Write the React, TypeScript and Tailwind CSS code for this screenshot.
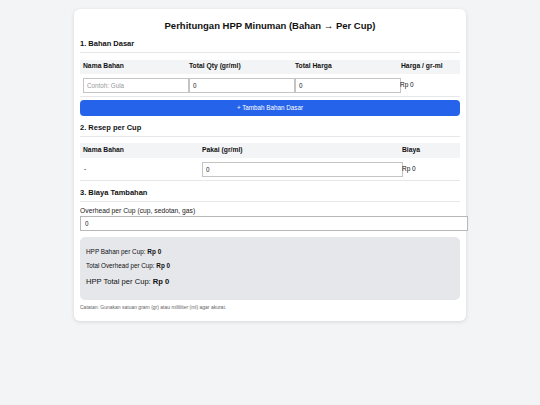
import React from "react";

export default function App() {
  const inputCls =
    "box-border block h-[15px] border border-[#c4c4c4] bg-white px-[3px] text-[6.3px] text-[#222] outline-none placeholder:text-[#9a9a9a]";
  return (
    <div className="min-h-screen bg-[#f3f4f6] pt-[9px] font-['Liberation_Sans',Arial,sans-serif] text-[#111]">
      <div className="mx-auto w-[392px] rounded-[6px] bg-white px-[6px] pt-[11px] pb-[11px] shadow-[0_1px_4px_rgba(0,0,0,0.12)]">
        <h2 className="text-center text-[9.5px] font-bold leading-[12px]">
          Perhitungan HPP Minuman (Bahan → Per Cup)
        </h2>

        <h3 className="mt-[6.5px] border-b border-[#e5e7eb] pb-[3px] text-[7.5px] font-bold leading-[10px]">
          1. Bahan Dasar
        </h3>
        <div className="mt-[7px]">
          <div className="grid h-[14px] grid-cols-[106px_106px_106px_1fr] items-center bg-[#f3f4f6] text-[6.75px] font-bold">
            <div className="pl-[3px]">Nama Bahan</div>
            <div className="pl-[3px]">Total Qty (gr/ml)</div>
            <div className="pl-[3px]">Total Harga</div>
            <div className="pl-[3px]">Harga / gr-ml</div>
          </div>
          <div className="grid grid-cols-[106px_106px_106px_1fr] items-center border-b border-[#e5e7eb] pt-[4px] pb-[3px] text-[6.5px]">
            <div className="pl-[3px]">
              <input className={inputCls + " w-[106px]"} placeholder="Contoh: Gula" />
            </div>
            <div className="pl-[3px]">
              <input className={inputCls + " w-[106px]"} defaultValue="0" />
            </div>
            <div className="pl-[3px]">
              <input className={inputCls + " w-[106px]"} defaultValue="0" />
            </div>
            <div className="pl-[2px]">Rp 0</div>
          </div>
        </div>
        <button className="mt-[3px] block h-[16px] w-full rounded-[4px] bg-[#2563eb] text-center text-[6.3px] leading-[16px] text-white">
          + Tambah Bahan Dasar
        </button>

        <h3 className="mt-[7px] border-b border-[#e5e7eb] pb-[3px] text-[7.5px] font-bold leading-[10px]">
          2. Resep per Cup
        </h3>
        <div className="mt-[6px]">
          <div className="grid h-[15px] grid-cols-[119px_200px_1fr] items-center bg-[#f3f4f6] text-[6.75px] font-bold">
            <div className="pl-[3px]">Nama Bahan</div>
            <div className="pl-[3px]">Pakai (gr/ml)</div>
            <div className="pl-[3px]">Biaya</div>
          </div>
          <div className="grid grid-cols-[119px_200px_1fr] items-center border-b border-[#e5e7eb] pt-[4px] pb-[3px] text-[6.5px]">
            <div className="pl-[4px]">-</div>
            <div className="pl-[3px]">
              <input className={inputCls + " w-[201px]"} defaultValue="0" />
            </div>
            <div className="pl-[3px]">Rp 0</div>
          </div>
        </div>

        <h3 className="mt-[7px] border-b border-[#e5e7eb] pb-[3px] text-[7.5px] font-bold leading-[10px]">
          3. Biaya Tambahan
        </h3>
        <div className="mt-[5px] text-[6.75px] leading-[8px] text-[#222]">
          Overhead per Cup (cup, sedotan, gas)
        </div>
        <input
          className="mt-[1px] box-border block h-[15px] w-[388px] border border-[#b8b8b8] bg-white px-[4px] text-[6.3px] text-[#222] outline-none"
          defaultValue="0"
        />

        <div className="mt-[6px] rounded-[5px] bg-[#e5e7eb] px-[6px] pt-[11.5px] pb-[13px] text-[#111]">
          <p className="text-[6.4px] leading-[8px]">
            HPP Bahan per Cup: <b>Rp 0</b>
          </p>
          <p className="mt-[6px] text-[6.3px] leading-[8px]">
            Total Overhead per Cup: <b>Rp 0</b>
          </p>
          <p className="mt-[5.5px] text-[7.6px] leading-[11px]">
            HPP Total per Cup: <b>Rp 0</b>
          </p>
        </div>

        <p className="mt-[4px] text-[5px] leading-[6px] text-[#666]">
          Catatan: Gunakan satuan gram (gr) atau milliliter (ml) agar akurat.
        </p>
      </div>
    </div>
  );
}
